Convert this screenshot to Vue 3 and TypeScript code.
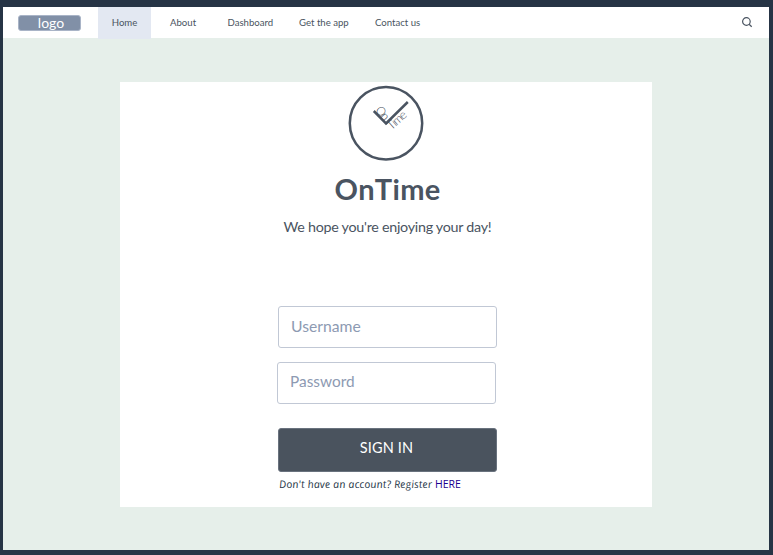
<script setup lang="ts">
import { ref } from 'vue'

const links: { label: string; cls: string }[] = [
  { label: 'Home', cls: 'home' },
  { label: 'About', cls: 'about' },
  { label: 'Dashboard', cls: 'dashboard' },
  { label: 'Get the app', cls: 'app' },
  { label: 'Contact us', cls: 'contact' },
]
const active = ref('Home')
const username = ref('')
const password = ref('')
</script>

<template>
  <div class="frame">
    <div class="page">
      <header class="nav">
        <div class="logo">logo</div>
        <nav class="links">
          <a
            v-for="link in links"
            :key="link.label"
            :class="['link', link.cls, { active: active === link.label }]"
            @click="active = link.label"
          >{{ link.label }}</a>
        </nav>
        <svg class="search" viewBox="0 0 12 12" width="12" height="12">
          <circle cx="5.4" cy="5.5" r="3.8" />
          <path d="M8.1 8.3 L10.7 10.8" />
        </svg>
      </header>
      <main class="card">
        <svg class="clock" viewBox="0 0 76 76" width="76" height="76">
          <circle cx="38" cy="38.3" r="36.2" />
          <path d="M25.8 26 L38 38.4 L59.8 17" />
          <text transform="translate(26.8 25.6) rotate(48)" textLength="14.5">On</text>
          <text transform="translate(43.4 45.6) rotate(-42)" textLength="22">Time</text>
        </svg>
        <h1>OnTime</h1>
        <p class="greeting">We hope you're enjoying your day!</p>
        <form class="form" @submit.prevent>
          <input v-model="username" class="field user" type="text" placeholder="Username" />
          <input v-model="password" class="field pass" type="password" placeholder="Password" />
          <button class="submit" type="submit">SIGN IN</button>
          <p class="register"><span>Don't have an account? Register</span> <a>HERE</a></p>
        </form>
      </main>
    </div>
  </div>
</template>

<style>
body {
  margin: 0;
}
</style>

<style scoped>
.frame {
  box-sizing: border-box;
  width: 773px;
  height: 555px;
  padding: 7px 4px 5px 3px;
  background: #263445;
  font-family: Lato, sans-serif;
  color: #4a5461;
}
.page {
  height: 543px;
  background: #e6efea;
}
.nav {
  display: flex;
  height: 31px;
  background: #fff;
}
.logo {
  width: 61px;
  height: 14px;
  margin: 8px 17px 0 15px;
  border: 1px solid #a9b4c7;
  border-radius: 3px;
  background: #8190a7;
  color: #fff;
  font-size: 14px;
  line-height: 13px;
  text-align: center;
  text-indent: 3px;
}
.links {
  display: flex;
  flex: 1;
  font-size: 9.6px;
  line-height: 32px;
  white-space: nowrap;
}
.link {
  height: 32px;
}
.home {
  width: 53px;
  text-align: center;
}
.active {
  background: #e3e8f2;
}
.about {
  box-sizing: border-box;
  width: 76.5px;
  padding-left: 19px;
}
.dashboard {
  width: 71.5px;
}
.app {
  width: 76px;
}
.search {
  margin: 9px 16px 0 0;
  fill: none;
  stroke: #4a5461;
  stroke-width: 1.2;
}
.card {
  display: flex;
  flex-direction: column;
  align-items: center;
  width: 532px;
  height: 425px;
  margin: 44px 0 0 117px;
  background: #fff;
}
.clock {
  margin-top: 3px;
  fill: none;
  stroke: #4a5461;
  stroke-width: 2.5;
}
.clock text {
  fill: #3f4a57;
  stroke: none;
  font-size: 12px;
  font-weight: 300;
}
h1 {
  margin: 10px 0 0 3px;
  font-size: 29px;
  line-height: 36px;
  font-weight: 700;
  font-kerning: none;
  letter-spacing: 0.3px;
}
.greeting {
  margin: 10px 0 0 3px;
  font-size: 14.3px;
  line-height: 20px;
  letter-spacing: -0.27px;
}
.form {
  display: flex;
  flex-direction: column;
  width: 219px;
  margin: 69px 0 0 3px;
}
.field {
  box-sizing: border-box;
  width: 219px;
  height: 42px;
  padding: 0 12px 3px;
  border: 1px solid #c1c8d5;
  border-radius: 3px;
  outline: none;
  background: #fff;
  color: #4a5461;
  font: 15.7px Lato, sans-serif;
}
.field::placeholder {
  color: #8d9ab2;
  opacity: 1;
}
.pass {
  margin: 14px 0 0 -1px;
  padding-bottom: 4px;
  font-size: 15.4px;
}
.submit {
  height: 44px;
  margin-top: 24px;
  padding: 0 2px 6px 0;
  border: 1px solid #69727e;
  border-radius: 3px;
  background: #4a535e;
  color: #fff;
  font: 14.5px Lato, sans-serif;
  letter-spacing: 0.15px;
}
.register {
  margin: 4px 0 0 1px;
  color: #273748;
  font: italic 10.5px/16px "Open Sans", sans-serif;
  letter-spacing: 0.17px;
  white-space: nowrap;
}
.register span {
  display: inline-block;
  transform: skewX(7deg);
}
.register a {
  color: #1a0090;
  font-style: normal;
  letter-spacing: 0;
}
</style>
